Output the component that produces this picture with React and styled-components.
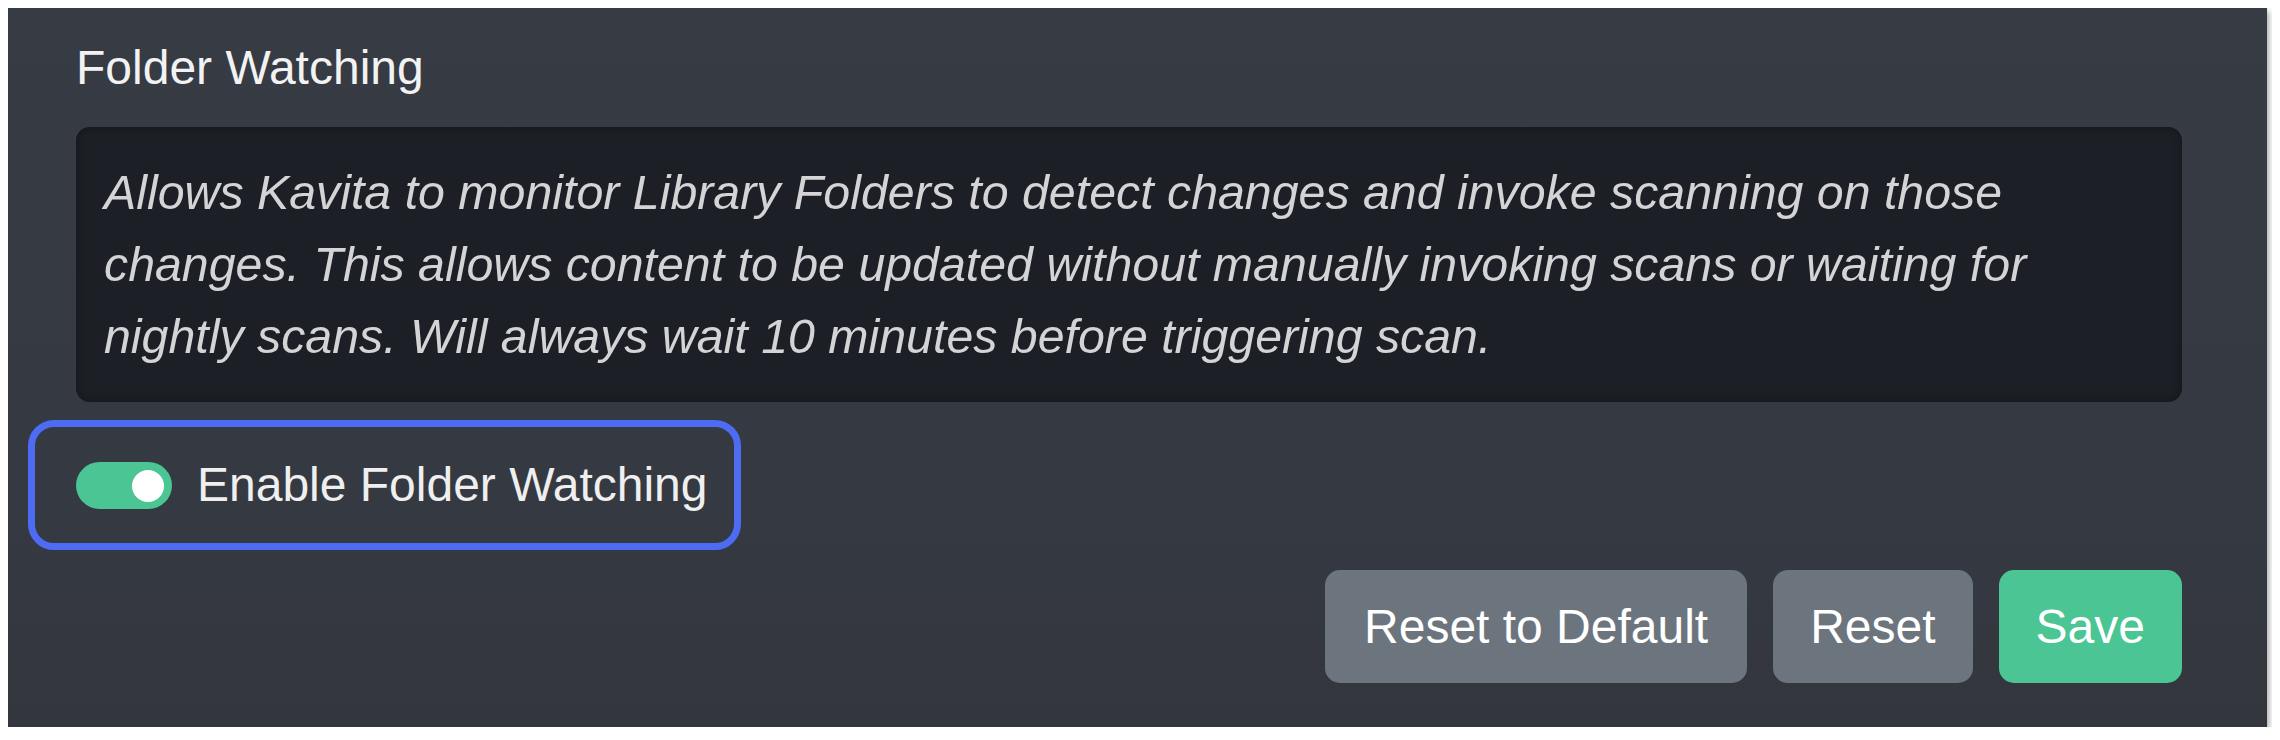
import React, { useState } from 'react';
import styled, { createGlobalStyle } from 'styled-components';

const GlobalStyle = createGlobalStyle`
  body {
    margin: 8px;
    background: #ffffff;
    font-family: "Liberation Sans", Arial, sans-serif;
  }
`;

function App() {
  const [watching, setWatching] = useState(true);

  return (
    <>
      <GlobalStyle />
      <Panel>
        <Title>Folder Watching</Title>
        <Description>
          Allows Kavita to monitor Library Folders to detect changes and invoke scanning on those
          changes. This allows content to be updated without manually invoking scans or waiting for
          nightly scans. Will always wait 10 minutes before triggering scan.
        </Description>

        <SwitchRow>
          <Switch
            type="button"
            role="switch"
            aria-checked={watching}
            $on={watching}
            onClick={() => setWatching(!watching)}
          >
            <Knob $on={watching} />
          </Switch>
          <SwitchLabel>Enable Folder Watching</SwitchLabel>
        </SwitchRow>

        <ButtonRow>
          <Button $variant="secondary" $pad={39}>Reset to Default</Button>
          <Button $variant="secondary" $pad={37}>Reset</Button>
          <Button $variant="primary" $pad={37}>Save</Button>
        </ButtonRow>
      </Panel>
    </>
  );
}

export default App;

// ====== Styled Components ======
const Panel = styled.div`
  width: 2259px;
  height: 719px;
  box-sizing: border-box;
  padding: 31px 85px 44px 68px;
  display: flex;
  flex-direction: column;
  align-items: flex-start;
  background: linear-gradient(180deg, #373b44 0%, #353941 70%, #33363d 100%);
  box-shadow: 2px 3px 6px rgba(0, 0, 0, 0.35);
`;

const Title = styled.div`
  font-size: 48px;
  line-height: 57.6px;
  color: #f2f2f2;
`;

const Description = styled.p`
  margin: 30px 0 0;
  width: 100%;
  box-sizing: border-box;
  height: 275px;
  padding: 29.5px 28px;
  border-radius: 14px;
  background: #1c1f25;
  box-shadow: inset 0 0 10px rgba(0, 0, 0, 0.35);
  font-size: 48.3px;
  font-style: italic;
  line-height: 72px;
  color: #d4d4d6;
`;

const SwitchRow = styled.div`
  margin: 18px 0 0 -48px;
  height: 131px;
  box-sizing: border-box;
  display: inline-flex;
  align-items: center;
  gap: 25px;
  padding: 0 26px 0 41px;
  border: 7px solid #4d6bf3;
  border-radius: 26px;
`;

const Switch = styled.button`
  position: relative;
  width: 96px;
  height: 47px;
  padding: 0;
  border: none;
  border-radius: 24px;
  background: ${(p) => (p.$on ? '#4bc594' : '#6c757d')};
  cursor: pointer;
  margin-top: 2px;
`;

const Knob = styled.span`
  position: absolute;
  top: 7.5px;
  left: ${(p) => (p.$on ? '56px' : '8px')};
  width: 32px;
  height: 32px;
  border-radius: 50%;
  background: #ffffff;
`;

const SwitchLabel = styled.label`
  font-size: 48px;
  line-height: 72px;
  color: #efefef;
`;

const ButtonRow = styled.div`
  margin-top: 20px;
  width: 100%;
  display: flex;
  justify-content: flex-end;
  gap: 26px;
`;

const Button = styled.button`
  height: 113px;
  padding: 0 ${(p) => p.$pad}px;
  border: none;
  border-radius: 15px;
  font-family: "Liberation Sans", Arial, sans-serif;
  font-size: 48px;
  color: #ffffff;
  background: ${(p) => (p.$variant === 'primary' ? '#4bc594' : '#6c757d')};
  cursor: pointer;
`;
